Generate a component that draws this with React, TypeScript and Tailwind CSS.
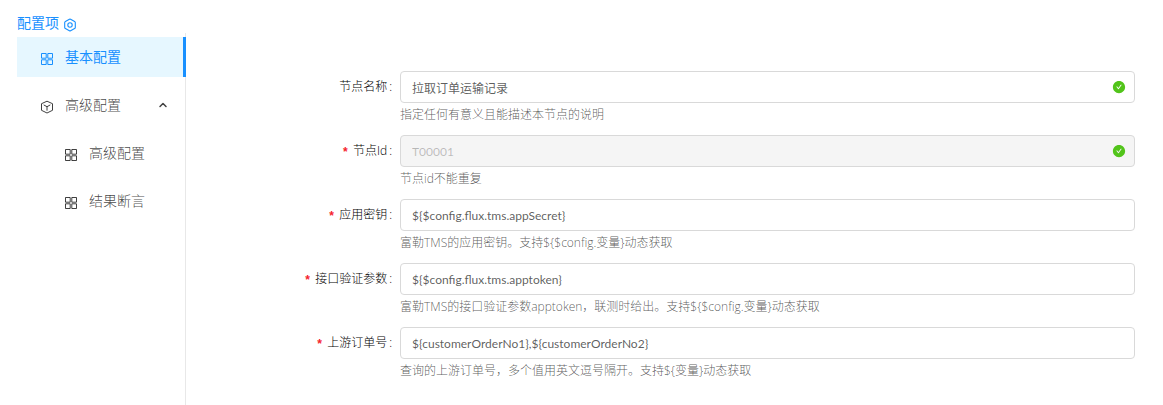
import React, { useState } from 'react';
import { AiFillCheckCircle } from 'react-icons/ai';
import { ChevronUp } from 'lucide-react';

const fields = [
  { id: 'name', label: '节点名称', value: '拉取订单运输记录', help: '指定任何有意义且能描述本节点的说明', valid: true },
  { id: 'nodeId', label: '节点Id', value: 'T00001', help: '节点id不能重复', required: true, disabled: true, valid: true },
  { id: 'appSecret', label: '应用密钥', value: '${$config.flux.tms.appSecret}', help: '富勒TMS的应用密钥。支持${$config.变量}动态获取', required: true },
  { id: 'apptoken', label: '接口验证参数', value: '${$config.flux.tms.apptoken}', help: '富勒TMS的接口验证参数apptoken，联测时给出。支持${$config.变量}动态获取', required: true },
  { id: 'orderNo', label: '上游订单号', value: '${customerOrderNo1},${customerOrderNo2}', help: '查询的上游订单号，多个值用英文逗号隔开。支持${变量}动态获取', required: true },
];

function HexIcon() {
  return (
    <svg width="14" height="14" viewBox="0 0 14 14" fill="none" stroke="currentColor" strokeWidth="1.1" strokeLinejoin="round" aria-hidden="true">
      <path d="M6.4 1.3q.6-.3 1.2 0l4 2.2q.7.4.7 1.1v4.8q0 .7-.7 1.1l-4 2.2q-.6.3-1.2 0l-4-2.2q-.7-.4-.7-1.1V4.6q0-.7.7-1.1z" />
      <circle cx="7" cy="7" r="2.2" />
    </svg>
  );
}

function GridIcon() {
  return (
    <svg width="14" height="14" viewBox="0 0 14 14" fill="none" stroke="currentColor" className="mt-1 shrink-0" aria-hidden="true">
      <path d="M1.5 1.5h4.7v4.7H1.5zM7.8 1.5h4.7v4.7H7.8zM1.5 7.8h4.7v4.7H1.5zM7.8 7.8h4.7v4.7H7.8z" />
    </svg>
  );
}

function BoxIcon() {
  return (
    <svg width="14" height="14" viewBox="0 0 14 14" fill="none" stroke="currentColor" strokeLinejoin="round" className="mt-1 shrink-0" aria-hidden="true">
      <path d="M7 1.2l5.5 2.5v6.6L7 13l-5.5-2.7V3.7zM3.7 4.9L7 6.7l3.3-1.8M7 6.7v4" />
    </svg>
  );
}

function Field({ field }) {
  const [value, setValue] = useState(field.value);

  return (
    <div className="flex h-16 items-start">
      <label htmlFor={field.id} className="flex h-8 w-[214px] shrink-0 items-center justify-end pr-2 text-black">
        {field.required && <span className="mr-1 pt-1 font-['Liberation_Mono',monospace] text-xs font-bold text-[#f5222d]">*</span>}
        {field.label}
        <span className="ml-0.5">:</span>
      </label>
      <div className="min-w-0 flex-1">
        <div className="relative">
          <input
            id={field.id}
            type="text"
            value={value}
            disabled={field.disabled}
            onChange={(e) => setValue(e.target.value)}
            className="block h-8 w-full rounded border border-[#d9d9d9] bg-white px-[11px] font-['Lato','Noto_Sans_CJK_SC',sans-serif] font-normal text-black/65 outline-none focus:border-[#40a9ff] disabled:bg-[#f5f5f5] disabled:text-black/25"
          />
          {field.valid && <AiFillCheckCircle size={14} className="absolute right-[9px] top-[9px] text-[#52c41a]" />}
        </div>
        <p className="leading-6 text-black/65">{field.help}</p>
      </div>
    </div>
  );
}

export default function App() {
  return (
    <div className="flex min-h-screen bg-white pl-[17px] font-['Open_Sans','Noto_Sans_CJK_SC',sans-serif] text-xs font-light">

      {/* Sidebar */}
      <aside className="flex w-[169px] shrink-0 flex-col pt-3 text-sm text-black/75">
        <h1 className="flex h-[21px] items-center gap-1 font-normal text-[#1890ff]">
          配置项
          <span className="pt-1"><HexIcon /></span>
        </h1>
        <nav className="flex flex-1 flex-col gap-2 border-r border-[#e8e8e8] pt-1">
          <a href="#basic" className="-mr-px flex h-10 items-center gap-[11px] border-r-3 border-[#1890ff] bg-[#e6f7ff] pl-[23px] font-normal text-[#1890ff]">
            <GridIcon />
            基本配置
          </a>
          <button type="button" aria-expanded="true" className="flex h-10 items-center gap-[11px] pl-[23px] pr-4">
            <BoxIcon />
            高级配置
            <ChevronUp size={12} strokeWidth={3} className="ml-auto" />
          </button>
          <a href="#advanced" className="flex h-10 items-center gap-[11px] pl-[47px]">
            <GridIcon />
            高级配置
          </a>
          <a href="#assert" className="flex h-10 items-center gap-[11px] pl-[47px]">
            <GridIcon />
            结果断言
          </a>
        </nav>
      </aside>

      {/* Form */}
      <form className="min-w-0 flex-1 pr-7 pt-[71px]">
        {fields.map((f) => (
          <Field key={f.id} field={f} />
        ))}
      </form>
    </div>
  );
}
